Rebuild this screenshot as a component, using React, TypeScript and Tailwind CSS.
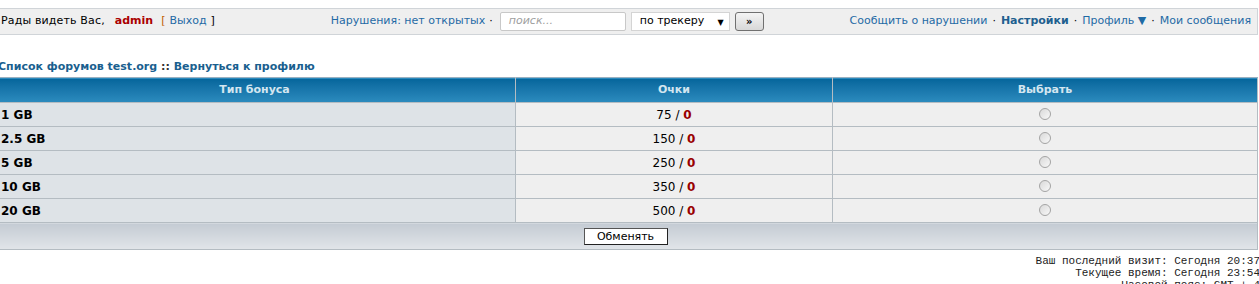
import React from "react";

const rows = [
  { name: "1 GB", points: 75 },
  { name: "2.5 GB", points: 150 },
  { name: "5 GB", points: 250 },
  { name: "10 GB", points: 350 },
  { name: "20 GB", points: 500 },
];

const Radio = () => (
  <span className="inline-block w-[12px] h-[12px] rounded-full border border-[#a4a4a4] bg-gradient-to-br from-[#d9d9d9] to-[#f8f8f8] align-middle" />
);

const App = () => {
  return (
    <div className="w-[1259px] h-[284px] overflow-hidden bg-white text-[11px] text-black font-['DejaVu_Sans',Verdana,sans-serif]">
      {/* top bar */}
      <div className="mt-[8px] h-[27px] w-[1258px] flex items-center bg-[#efefef] border-y border-r border-[#d0d4d8] pl-[1px] pr-[6px]">
        <span className="tracking-[0.15px]">Рады видеть Вас,</span>
        <span className="ml-[10px] font-bold text-[#aa0000]">admin</span>
        <span className="ml-[8px] text-[#c06000]">[</span>
        <a className="ml-[4px] text-[#1f6aa5]">Выход</a>
        <span className="ml-[4px]">]</span>
        <a className="ml-[116px] text-[#1f6aa5]">Нарушения: нет открытых</a>
        <span className="ml-[4px]">·</span>
        <div className="ml-[7px] w-[126px] h-[19px] border border-[#c8c8c8] bg-white rounded-[2px] flex items-center pl-[8px] text-[#a0a0a0] italic">
          поиск...
        </div>
        <div className="ml-[5px] w-[99px] h-[19px] border border-[#d4d4d4] bg-white flex items-center pl-[8px] pr-[5px]">
          <span className="flex-1">по трекеру</span>
          <span className="text-[8px] leading-none mt-[3px]">▼</span>
        </div>
        <button className="ml-[5px] w-[29px] h-[19px] border border-[#707070] rounded-[3px] bg-gradient-to-b from-[#f4f4f4] to-[#d8d8d8] text-[10px] font-bold leading-none">
          »
        </button>
        <div className="ml-auto flex items-center gap-[5px]">
          <a className="text-[#1f6aa5]">Сообщить о нарушении</a>
          <span>·</span>
          <a className="text-[#1f5f8f] font-bold">Настройки</a>
          <span>·</span>
          <a className="text-[#1f6aa5]">Профиль ▼</a>
          <span>·</span>
          <a className="text-[#1f6aa5]">Мои сообщения</a>
        </div>
      </div>

      {/* breadcrumb */}
      <div className="mt-[25px] ml-[-2px] h-[13px] leading-[13px] font-bold text-[#1a5f8f]">
        <a>Список форумов test.org</a> <span className="text-[#333]">::</span>{" "}
        <a>Вернуться к профилю</a>
      </div>

      {/* table */}
      <table className="mt-[4px] ml-[-7px] w-[1265px] border-collapse border border-[#b4bcc2]">
        <thead>
          <tr className="h-[25px] bg-gradient-to-b from-[#05669c] to-[#2c8cbf] text-[#d4e6f0] font-bold border-t border-[#9ab0c0]">
            <th className="w-[522px] border-r border-[#b4bcc2]">Тип бонуса</th>
            <th className="w-[317px] border-r border-[#b4bcc2]">Очки</th>
            <th>Выбрать</th>
          </tr>
        </thead>
        <tbody>
          {rows.map((r) => (
            <tr key={r.name} className="h-[24px] border-t border-[#b4bcc2]">
              <td className="bg-[#dee3e7] pl-[7px] font-bold text-[12px] border-r border-[#b4bcc2]">
                {r.name}
              </td>
              <td className="bg-[#efefef] text-center text-[12px] border-r border-[#b4bcc2]">
                {r.points} / <b className="text-[#990000]">0</b>
              </td>
              <td className="bg-[#efefef] text-center">
                <Radio />
              </td>
            </tr>
          ))}
          <tr className="h-[27px] border-t border-[#b4bcc2]">
            <td colSpan={3} className="bg-gradient-to-b from-[#c4cbd3] to-[#e1e5e9] text-center">
              <button className="w-[84px] h-[17px] bg-white border border-[#555] border-r-[#222] border-b-[#222] text-[11px] leading-none align-middle">
                Обменять
              </button>
            </td>
          </tr>
        </tbody>
      </table>

      {/* footer info */}
      <div className="mt-[5px] mr-[-1px] text-right font-['Liberation_Mono',monospace] text-[11px] leading-[12px] text-[#222]">
        <div>Ваш последний визит: Сегодня 20:37</div>
        <div>Текущее время: Сегодня 23:54</div>
        <div>Часовой пояс: GMT + 4</div>
      </div>
    </div>
  );
};

export default App;
